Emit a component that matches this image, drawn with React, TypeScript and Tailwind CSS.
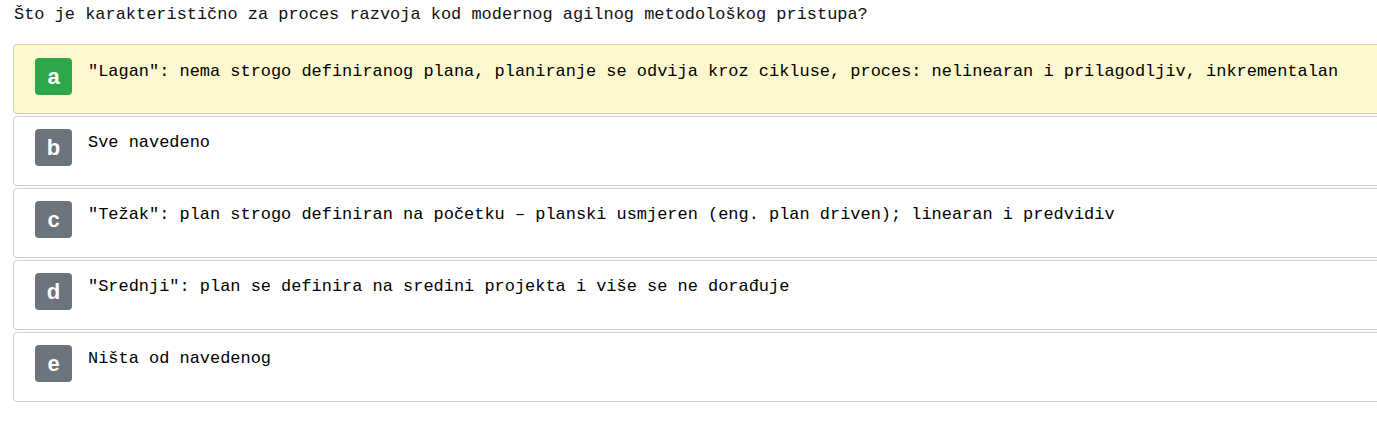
import React from "react";

const options = [
  { key: "a", text: "\"Lagan\": nema strogo definiranog plana, planiranje se odvija kroz cikluse, proces: nelinearan i prilagodljiv, inkrementalan", selected: true },
  { key: "b", text: "Sve navedeno", selected: false },
  { key: "c", text: "\"Težak\": plan strogo definiran na početku – planski usmjeren (eng. plan driven); linearan i predvidiv", selected: false },
  { key: "d", text: "\"Srednji\": plan se definira na sredini projekta i više se ne dorađuje", selected: false },
  { key: "e", text: "Ništa od navedenog", selected: false },
];

export default function App() {
  return (
    <div className="w-[1377px] h-[423px] overflow-hidden bg-white">
      <div className="w-[1420px] pl-[13px] pt-[3px]">
        <div
          className="text-[16.95px] leading-[24px] text-[#111] pl-[1px]"
          style={{ fontFamily: '"Liberation Mono", "Courier New", monospace' }}
        >
          Što je karakteristično za proces razvoja kod modernog agilnog metodološkog pristupa?
        </div>
        <div className="mt-[17px] flex flex-col gap-[2px]">
          {options.map((o) => (
            <div
              key={o.key}
              className={
                o.selected
                  ? "h-[70px] flex items-start border border-[#d6d1ad] bg-[#fdf8cd] rounded-[4px] pl-[21px] pt-[13px]"
                  : "h-[70px] flex items-start border border-[#d0d0d0] bg-white rounded-[4px] pl-[21px] pt-[12px]"
              }
            >
              <div
                className={
                  o.selected
                    ? "w-[37px] h-[37px] shrink-0 rounded-[4px] bg-[#2ca84a] text-white flex items-center justify-center text-[22px] font-bold"
                    : "w-[37px] h-[37px] shrink-0 rounded-[4px] bg-[#6b737c] text-white flex items-center justify-center text-[22px] font-bold"
                }
                style={{ fontFamily: '"Liberation Sans", Arial, sans-serif' }}
              >
                <span>{o.key}</span>
              </div>
              <div
                className="ml-[16px] mt-[2px] text-[16.95px] leading-[24px] text-black whitespace-nowrap"
                style={{ fontFamily: '"Liberation Mono", "Courier New", monospace' }}
              >
                {o.text}
              </div>
            </div>
          ))}
        </div>
      </div>
    </div>
  );
}
